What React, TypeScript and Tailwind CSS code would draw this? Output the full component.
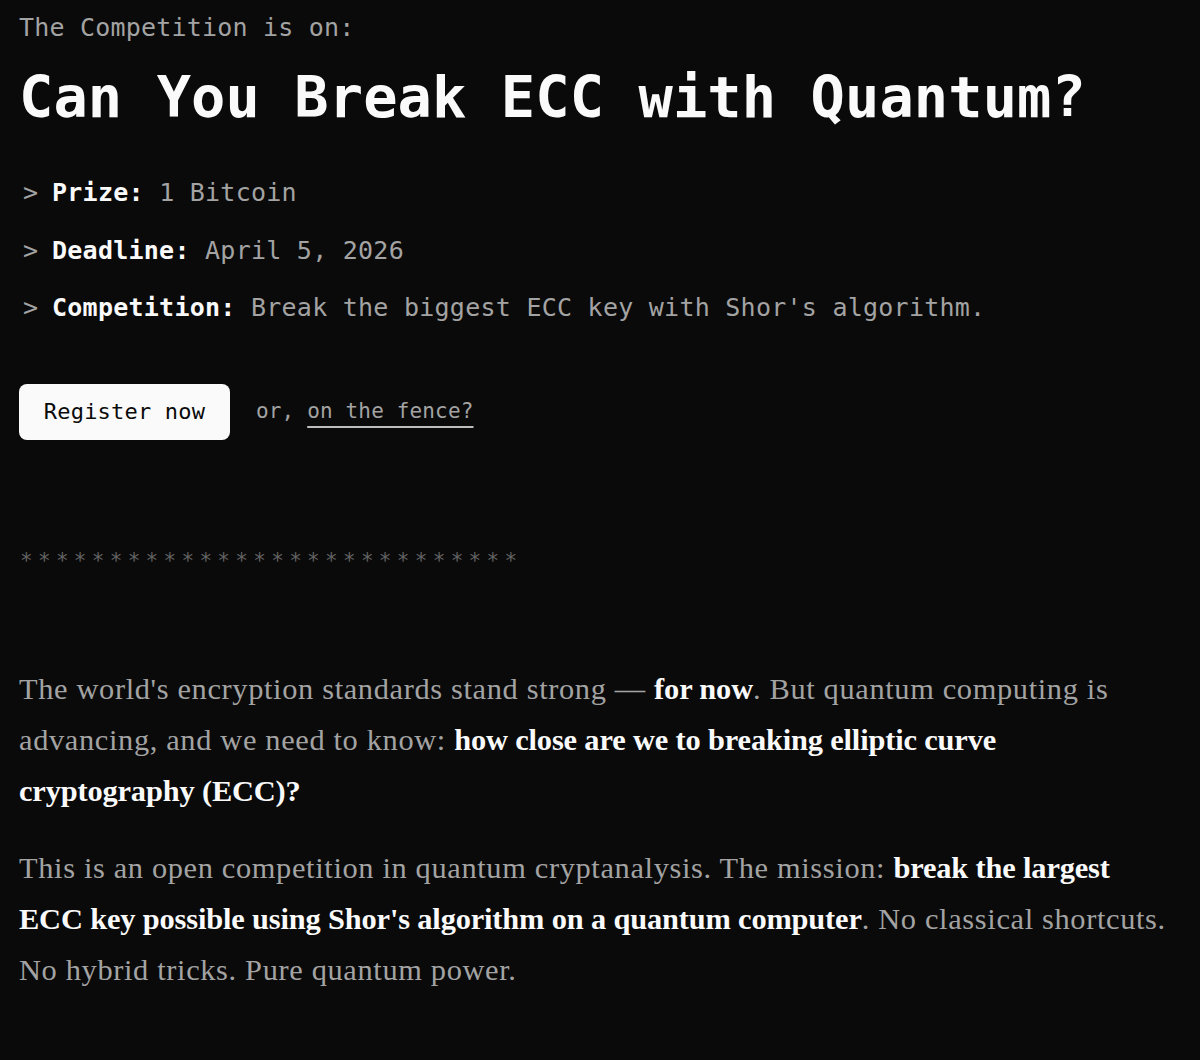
import React from "react";

const mono = "font-['DejaVu_Sans_Mono','Liberation_Mono',monospace]";
const serif = "font-['Liberation_Serif','DejaVu_Serif',serif]";

function Fact({ label, value }: { label: string; value: string }) {
  return (
    <li className="flex items-baseline h-[57.5px] leading-[57.5px]">
      <span className="text-[#a3a3a3] w-[33px] pl-[4px]">&gt;</span>
      <span className="font-bold text-[#fafafa]">{label}:</span>
      <span className="text-[#a3a3a3]">&nbsp;{value}</span>
    </li>
  );
}

function Em({ children }: { children: React.ReactNode }) {
  return <strong className="text-[#fafafa] font-bold tracking-[-0.15px]">{children}</strong>;
}

export default function App() {
  return (
    <div className="min-h-[1060px] w-full bg-[#0a0a0a] px-[19px] pt-[10px] pb-10">
      <section className={mono}>
        <p className="text-[25px] leading-[36px] text-[#a3a3a3] tracking-[0.2px]">
          The Competition is on:
        </p>
        <h1 className="mt-[16px] text-[57px] leading-[70px] font-bold text-[#fafafa] tracking-[0.1px]">
          Can You Break ECC with Quantum?
        </h1>
        <ul className="mt-[32px] text-[25px] tracking-[0.25px]">
          <Fact label="Prize" value="1 Bitcoin" />
          <Fact label="Deadline" value="April 5, 2026" />
          <Fact label="Competition" value="Break the biggest ECC key with Shor's algorithm." />
        </ul>
        <div className="mt-[47px] flex items-center gap-[26px]">
          <button className="h-[56px] w-[211px] rounded-[8px] bg-[#fafafa] text-[#0a0a0a] text-[22px] tracking-[0.2px]">
            Register now
          </button>
          <p className="text-[21px] text-[#a3a3a3] tracking-[0.15px]">
            or,{" "}
            <a
              href="#"
              className="underline decoration-[#bdbdbd] decoration-2 underline-offset-[8px]"
            >
              on the fence?
            </a>
          </p>
        </div>
        <div className="mt-[104px] h-[24px] text-[21px] leading-[34px] text-[#626262] tracking-[5.3px] pl-[1px] overflow-visible">
          ****************************
        </div>
      </section>

      <section
        className={`${serif} mt-[96px] text-[30.4px] leading-[51px] text-[#a3a3a3] tracking-[0.65px] pr-[3px]`}
      >
        <p>
          The world's encryption standards stand strong — <Em>for now</Em>. But quantum computing is
          advancing, and we need to know:{" "}
          <Em>how close are we to breaking elliptic curve cryptography (ECC)?</Em>
        </p>
        <p className="mt-[26px]">
          This is an open competition in quantum cryptanalysis. The mission:{" "}
          <Em>break the largest ECC key possible using Shor's algorithm on a quantum computer</Em>.
          No classical shortcuts. No hybrid tricks. Pure quantum power.
        </p>
      </section>
    </div>
  );
}
